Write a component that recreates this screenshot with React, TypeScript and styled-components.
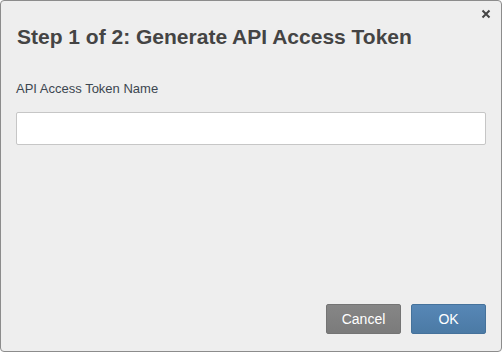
import styled, { createGlobalStyle } from "styled-components";

const GlobalStyle = createGlobalStyle`
  html, body {
    margin: 0;
    padding: 0;
    background: #ffffff;
  }
  body {
    font-family: "Liberation Sans", Arial, sans-serif;
  }
`;

const Dialog = styled.div`
  box-sizing: border-box;
  width: 502px;
  height: 352px;
  background: #eeeeee;
  border: 1px solid #8c8c8c;
  border-radius: 4px;
  display: flex;
  flex-direction: column;
  position: relative;
`;

const Header = styled.div`
  padding: 24px 16px 0 16px;
`;

const Title = styled.h1`
  margin: 0;
  font-size: 21px;
  font-weight: bold;
  line-height: 24px;
  color: #444444;
`;

const CloseButton = styled.button`
  position: absolute;
  top: 5px;
  right: 7px;
  width: 16px;
  height: 16px;
  padding: 0;
  border: none;
  background: transparent;
  display: flex;
  align-items: center;
  justify-content: center;
  cursor: pointer;
`;

const Body = styled.div`
  flex: 1;
  padding: 32px 15px 0 15px;
  display: flex;
  flex-direction: column;
`;

const Label = styled.label`
  font-size: 13px;
  line-height: 16px;
  color: #3c4650;
  margin-bottom: 15px;
`;

const Input = styled.input`
  box-sizing: border-box;
  width: 470px;
  height: 33px;
  background: #ffffff;
  border: 1px solid #c6c6c6;
  border-radius: 2px;
  outline: none;
  font-family: inherit;
  font-size: 13px;
  padding: 0 8px;
`;

const Footer = styled.div`
  display: flex;
  justify-content: flex-end;
  gap: 10px;
  padding: 0 15px 17px 0;
`;

const Button = styled.button<{ primary?: boolean }>`
  box-sizing: border-box;
  width: 75px;
  height: 30px;
  border-radius: 2px;
  border: 1px solid ${(p) => (p.primary ? "#45729b" : "#747474")};
  background: ${(p) =>
    p.primary
      ? "linear-gradient(#5787b6, #4b7aa5)"
      : "linear-gradient(#868686, #7b7b7b)"};
  color: #ffffff;
  font-family: inherit;
  font-size: 14px;
  cursor: pointer;
`;

export default function App() {
  return (
    <>
      <GlobalStyle />
      <Dialog>
        <CloseButton aria-label="Close">
          <svg width="10" height="10" viewBox="0 0 10 10">
            <path
              d="M1.5 1.5 L8.5 8.5 M8.5 1.5 L1.5 8.5"
              stroke="#444"
              strokeWidth="2"
            />
          </svg>
        </CloseButton>
        <Header>
          <Title>Step 1 of 2: Generate API Access Token</Title>
        </Header>
        <Body>
          <Label>API Access Token Name</Label>
          <Input type="text" />
        </Body>
        <Footer>
          <Button>Cancel</Button>
          <Button primary>OK</Button>
        </Footer>
      </Dialog>
    </>
  );
}
